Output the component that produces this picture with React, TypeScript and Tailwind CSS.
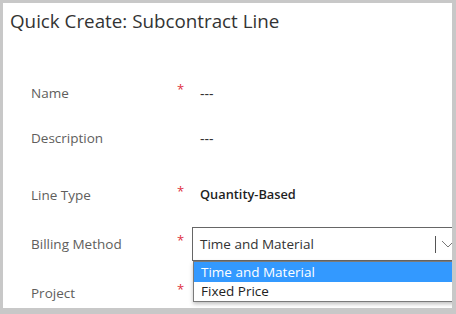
import React from 'react';

const font = { fontFamily: '"Segoe UI", "Open Sans", "Noto Sans", sans-serif' };

function Row({ label, required, children, className }: { label: string; required?: boolean; children: React.ReactNode; className?: string }) {
  return (
    <div className={`flex items-center h-[34px] ${className ?? ''}`}>
      <div className="w-[146px] shrink-0 text-[13.5px] text-[#605e5c]">{label}</div>
      <div className="w-[15px] shrink-0 text-[13px] text-[#e0303e] self-center -mt-[6px]">{required ? '*' : ''}</div>
      {children}
    </div>
  );
}

export default function App() {
  return (
    <div className="w-[456px] h-[314px] bg-[#c8c8c8] pt-[3px] pl-[3px] pr-[4px] pb-[6px]" style={font}>
      <div className="relative h-full bg-white overflow-hidden">
        <div className="h-[73px] pl-[7px] pt-[4px]">
          <h1 className="text-[18.8px] text-[#333333] leading-[28px]">Quick Create: Subcontract Line</h1>
        </div>
        <div className="pl-[28px]">
          <Row label="Name" required>
            <span className="pl-[8px] text-[14px] text-[#333]">---</span>
          </Row>
          <Row label="Description" className="mt-[11px]">
            <span className="pl-[8px] text-[14px] text-[#333]">---</span>
          </Row>
          <Row label="Line Type" required className="mt-[23px]">
            <span className="pl-[8px] text-[12.8px] font-semibold text-[#1f1f1f]">Quantity-Based</span>
          </Row>
          <Row label="Billing Method" required className="mt-[15px]">
            <div className="relative shrink-0">
              <div className="w-[272px] h-[34px] border border-[#666] flex items-center pl-[7px] text-[13.5px] text-[#333]">
                <span className="w-[235px] shrink-0">Time and Material</span>
                <span className="w-px h-[17px] bg-[#555] shrink-0" />
                <svg width="14" height="8" viewBox="0 0 14 8" className="ml-[5px] shrink-0">
                  <path d="M1 1 L7 7 L13 1" fill="none" stroke="#777" strokeWidth="1" />
                </svg>
              </div>
              <div className="absolute left-px top-[34px] w-[272px] bg-white border border-[#7a7a7a] shadow-[0_2px_4px_rgba(0,0,0,0.25)] text-[13.5px]">
                <div className="h-[20px] bg-[#3399ff] text-white pl-[7px] leading-[20px]">Time and Material</div>
                <div className="h-[19px] text-[#222] pl-[7px] leading-[19px]">Fixed Price</div>
              </div>
            </div>
          </Row>
          <Row label="Project" required className="mt-[15px]">
            <span />
          </Row>
        </div>
      </div>
    </div>
  );
}
